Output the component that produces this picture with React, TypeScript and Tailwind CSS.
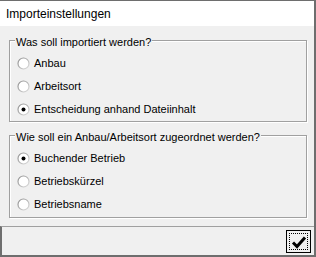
import React, { useState } from 'react';

type Option = { id: string; label: string };

const importOptions: Option[] = [
    { id: 'anbau', label: 'Anbau' },
    { id: 'arbeitsort', label: 'Arbeitsort' },
    { id: 'datei', label: 'Entscheidung anhand Dateiinhalt' },
];

const assignOptions: Option[] = [
    { id: 'betrieb', label: 'Buchender Betrieb' },
    { id: 'kuerzel', label: 'Betriebskürzel' },
    { id: 'name', label: 'Betriebsname' },
];

function Radio({ checked }: { checked: boolean }) {
    return (
        <svg width="13" height="13" viewBox="0 0 13 13" className="shrink-0">
            <defs>
                <linearGradient id="ring" x1="0" y1="0" x2="1" y2="1">
                    <stop offset="0" stopColor="#8c8c8c" />
                    <stop offset="1" stopColor="#dedede" />
                </linearGradient>
            </defs>
            <circle cx="6.5" cy="6.5" r="5.5" fill="#fff" stroke="url(#ring)" strokeWidth="1.2" />
            {checked && <circle cx="6.5" cy="6.5" r="2" fill="#000" />}
        </svg>
    );
}

function Group({
    title,
    options,
    value,
    onChange,
    className,
}: {
    title: string;
    options: Option[];
    value: string;
    onChange: (v: string) => void;
    className: string;
}) {
    return (
        <div
            className={`relative border border-[#a0a0a0] shadow-[inset_1px_1px_0_#fff,1px_1px_0_#fff] pt-[11px] ${className}`}
        >
            <span className="absolute left-[5px] top-[-6px] bg-[#f0f0f0] px-[1px] leading-[15px]">{title}</span>
            {options.map((o) => (
                <label
                    key={o.id}
                    className="h-[23px] flex items-center pl-[7px] gap-[4px] cursor-default"
                    onClick={() => onChange(o.id)}
                >
                    <Radio checked={value === o.id} />
                    <span className="leading-[15px]">{o.label}</span>
                </label>
            ))}
        </div>
    );
}

export default function App() {
    const [source, setSource] = useState('datei');
    const [assign, setAssign] = useState('betrieb');

    return (
        <div className="w-[316px] h-[257px] flex flex-col bg-[#f0f0f0] border-t border-r-2 border-b-2 border-[#6e6e6e] text-[11px] text-black font-['Liberation_Sans',sans-serif]">
            <div className="h-[25px] shrink-0 bg-white flex items-center pl-[6px] text-[12px]">
                Importeinstellungen
            </div>
            <div className="flex-1 flex flex-col pl-[9px] pr-[7px] pt-[14px]">
                <Group
                    title="Was soll importiert werden?"
                    options={importOptions}
                    value={source}
                    onChange={setSource}
                    className="h-[82px]"
                />
                <Group
                    title="Wie soll ein Anbau/Arbeitsort zugeordnet werden?"
                    options={assignOptions}
                    value={assign}
                    onChange={setAssign}
                    className="h-[83px] mt-[13px]"
                />
            </div>
            <div className="h-[29px] shrink-0 border-t border-[#a0a0a0] border-l-2 border-l-[#6e6e6e] flex items-start justify-end pr-[3px] pt-[3px]">
                <button className="w-[25px] h-[23px] border border-black bg-[#f0f0f0] p-[2px] flex">
                    <span className="flex-1 border border-dotted border-black flex items-center justify-center">
                        <svg width="16" height="14" viewBox="0 0 16 14">
                            <path d="M2 7.5 L6 11.5 L14 2.5" fill="none" stroke="#000" strokeWidth="3" />
                        </svg>
                    </span>
                </button>
            </div>
        </div>
    );
}
